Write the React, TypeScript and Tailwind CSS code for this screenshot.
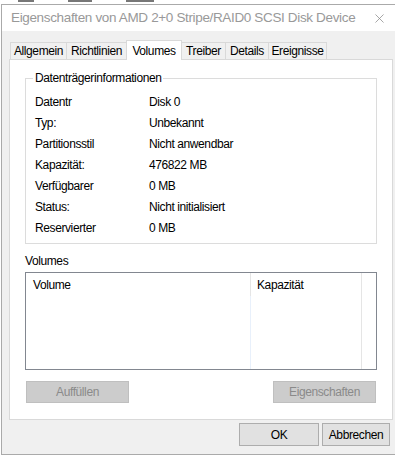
import { X } from 'lucide-react';

const rows: [string, string][] = [
  ['Datentr', 'Disk 0'],
  ['Typ:', 'Unbekannt'],
  ['Partitionsstil', 'Nicht anwendbar'],
  ['Kapazität:', '476822 MB'],
  ['Verfügbarer', '0 MB'],
  ['Status:', 'Nicht initialisiert'],
  ['Reservierter', '0 MB'],
];

const tabs: [string, number][] = [
  ['Allgemein', 56],
  ['Richtlinien', 60],
  ['Volumes', 55],
  ['Treiber', 44],
  ['Details', 43],
  ['Ereignisse', 58],
];

export default function App() {
  return (
    <div
      className="w-[395px] h-[458px] overflow-hidden bg-white flex flex-col text-[12px] tracking-[-0.4px] text-black"
      style={{ fontFamily: '"Liberation Sans", Arial, sans-serif' }}
    >
      {/* background window peeking out */}
      <div className="h-[4px] shrink-0 bg-white flex items-start gap-[34px] pl-[18px]">
        <div className="w-[16px] h-[2px] bg-[#777]" />
        <div className="w-[24px] h-[2px] bg-[#777]" />
        <div className="w-[28px] h-[2px] bg-[#777]" />
      </div>

      <div className="flex-1 flex flex-col ml-[1px] border-l border-t border-b border-[#aaaaaa] bg-[#f0f0f0] mb-[3px]">
        {/* title bar */}
        <div className="h-[26px] bg-white flex items-center pl-[9px] pr-[8px] shrink-0">
          <span className="text-[13.5px] text-[#999999] flex-1 whitespace-nowrap tracking-[-0.35px]">
            Eigenschaften von AMD 2+0 Stripe/RAID0 SCSI Disk Device
          </span>
          <X className="w-[15px] h-[15px] text-[#8a8a8a]" strokeWidth={1.2} />
        </div>

        {/* tabs */}
        <div className="flex items-end pl-[9px] mt-[9px] h-[19px] relative z-10 shrink-0">
          {tabs.map(([t, w]) =>
            t === 'Volumes' ? (
              <div
                key={t}
                style={{ width: w + 1 }}
                className="h-[20px] -mb-[1px] bg-white border border-b-0 border-[#d9d9d9] flex justify-center items-start pt-[1px] -ml-[1px]"
              >
                {t}
              </div>
            ) : (
              <div
                key={t}
                style={{ width: w + 1 }}
                className="h-[17px] bg-[#f0f0f0] border border-b-0 border-[#d9d9d9] -ml-[1px] flex justify-center items-center"
              >
                {t}
              </div>
            )
          )}
        </div>

        {/* tab panel */}
        <div className="ml-[7px] w-[384px] h-[361px] bg-white border border-[#d9d9d9] flex flex-col px-[15px] shrink-0">
          {/* group box */}
          <div className="mt-[18px] h-[166px] border border-[#dcdcdc] relative px-[9px] pt-[12px] shrink-0">
            <span className="absolute -top-[8px] left-[7px] bg-white px-[2px] leading-[14px]">
              Datenträgerinformationen
            </span>
            <div className="flex flex-col">
              {rows.map(([k, v]) => (
                <div key={k} className="flex h-[21px] items-center">
                  <span className="w-[114px]">{k}</span>
                  <span>{v}</span>
                </div>
              ))}
            </div>
          </div>

          <div className="mt-[10px] leading-[14px]">Volumes</div>

          {/* list view */}
          <div className="mt-[4px] h-[98px] border border-[#828790] flex shrink-0">
            <div className="w-[225px] border-r border-[#e5e5e5] flex flex-col">
              <div className="h-[23px] pl-[7px] flex items-center">Volume</div>
              <div className="flex-1" />
            </div>
            <div className="w-[111px] border-r border-[#e5e5e5] flex flex-col">
              <div className="h-[23px] pl-[6px] flex items-center">Kapazität</div>
              <div className="flex-1 border-l border-[#e8f0fb] -ml-[1px]" />
            </div>
          </div>

          {/* buttons */}
          <div className="mt-[11px] flex justify-between px-[1px]">
            <div className="w-[103px] h-[22px] bg-[#cccccc] border border-[#bfbfbf] flex items-center justify-center text-[#8a8a8a]">
              Auffüllen
            </div>
            <div className="w-[103px] h-[22px] bg-[#cccccc] border border-[#bfbfbf] flex items-center justify-center text-[#8a8a8a]">
              Eigenschaften
            </div>
          </div>
        </div>

        {/* dialog buttons */}
        <div className="flex justify-end gap-[3px] mt-[3px] pr-[5px]">
          <div className="w-[80px] h-[23px] bg-[#e1e1e1] border border-[#adadad] flex items-center justify-center">
            OK
          </div>
          <div className="w-[68px] h-[23px] bg-[#e1e1e1] border border-[#adadad] flex items-center justify-center">
            Abbrechen
          </div>
        </div>
      </div>
    </div>
  );
}
